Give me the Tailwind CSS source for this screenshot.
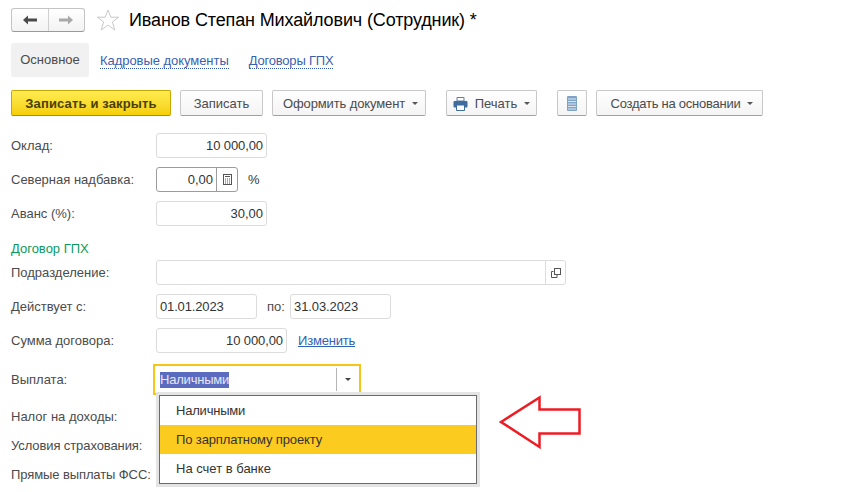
<!DOCTYPE html>
<html>
<head>
    <meta charset="utf-8">
    <title>Иванов Степан Михайлович (Сотрудник)</title>
    <script src="https://cdn.jsdelivr.net/npm/@tailwindcss/browser@4"></script>
</head>
<body class="bg-white overflow-hidden">
<div class="relative w-[854px] h-[492px] overflow-hidden pl-[11px] pt-[8px] font-['Liberation_Sans',Arial,sans-serif] text-[13px] text-[#4b4b4b]">

    <!-- title row -->
    <div class="flex items-center h-[24px]">
        <div class="flex w-[74px] h-[24px] rounded-[3px] border border-[#c4c4c4] border-b-[#9a9a9a] bg-gradient-to-b from-white to-[#f3f3f3]">
            <div class="flex-1 flex items-center justify-center border-r border-[#cfcfcf]">
                <svg width="14" height="10" viewBox="0 0 14 10"><path d="M0 5L5 0.5V3.5H14V6.5H5V9.5Z" fill="#4a4a4a"/></svg>
            </div>
            <div class="flex-1 flex items-center justify-center">
                <svg width="14" height="10" viewBox="0 0 14 10"><path d="M14 5L9 0.5V3.5H0V6.5H9V9.5Z" fill="#a9a9a9"/></svg>
            </div>
        </div>
        <svg class="ml-[11px]" width="24" height="22" viewBox="0 0 24 22"><path d="M12 1L14.8 8.2H22.6L16.4 13L18.8 21L12 16.2L5.2 21L7.6 13L1.4 8.2H9.2Z" fill="white" stroke="#c9c9c9"/></svg>
        <h1 class="ml-[9px] text-[18px] tracking-[-0.13px] text-black whitespace-nowrap">Иванов Степан Михайлович (Сотрудник) *</h1>
    </div>

    <!-- tabs -->
    <div class="flex items-center mt-[11px] h-[34px]">
        <div class="flex items-center justify-center w-[78px] h-[34px] rounded-[3px] bg-[#f1f1f1] text-[#4b4b4b]">Основное</div>
        <a class="ml-[11px] mt-[2px] tracking-[-0.05px] text-[#3a5fb0] border-b border-dotted border-[#2f55b0] leading-[14px]">Кадровые документы</a>
        <a class="ml-[20px] mt-[2px] tracking-[-0.2px] text-[#3a5fb0] border-b border-dotted border-[#2f55b0] leading-[14px]">Договоры ГПХ</a>
    </div>

    <!-- command bar -->
    <div class="flex items-center mt-[13px] h-[26px]">
        <button class="w-[160px] h-[26px] pt-[1px] rounded-[2px] border border-[#c8a800] border-b-[#a89000] bg-gradient-to-b from-[#ffec4d] to-[#f6cf00] font-bold tracking-[0.15px] text-[#4a4000]">Записать и закрыть</button>
        <button class="ml-[9px] w-[83px] h-[26px] pt-[1px] rounded-[2px] border border-[#c8c8c8] border-b-[#a0a0a0] bg-gradient-to-b from-white to-[#f4f4f4]">Записать</button>
        <button class="ml-[9px] w-[154px] h-[26px] pt-[1px] pl-[3px] rounded-[2px] border border-[#c8c8c8] border-b-[#a0a0a0] bg-gradient-to-b from-white to-[#f4f4f4] flex items-center justify-center gap-[7px] tracking-[-0.12px]">Оформить документ <span class="w-0 h-0 border-x-[3px] border-x-transparent border-t-[3px] border-t-[#555]"></span></button>
        <button class="ml-[20px] w-[91px] h-[26px] pt-[1px] rounded-[2px] border border-[#c8c8c8] border-b-[#a0a0a0] bg-gradient-to-b from-white to-[#f4f4f4] flex items-center justify-center gap-[7px]">
            <svg width="15" height="14" viewBox="0 0 15 14"><path d="M4 0.5H11V4H4Z" fill="white" stroke="#5b7fa6"/><rect x="0.5" y="4" width="14" height="6.5" rx="1" fill="#3f6d9e"/><path d="M3.5 8H11.5V13.5H3.5Z" fill="white" stroke="#3f6d9e"/></svg>
            Печать <span class="w-0 h-0 border-x-[3px] border-x-transparent border-t-[3px] border-t-[#555]"></span>
        </button>
        <button class="ml-[20px] w-[30px] h-[26px] rounded-[2px] border border-[#c8c8c8] border-b-[#a0a0a0] bg-gradient-to-b from-white to-[#f4f4f4] flex items-center justify-center">
            <svg width="10" height="15" viewBox="0 0 10 15"><rect width="10" height="15" rx="1" fill="#7fa3c7"/><path d="M1 3H9M1 5.5H9M1 8H9M1 10.5H9M1 13H9" stroke="#dfe8f1"/></svg>
        </button>
        <button class="ml-[9px] w-[167px] h-[26px] pt-[1px] pl-[5px] rounded-[2px] border border-[#c8c8c8] border-b-[#a0a0a0] bg-gradient-to-b from-white to-[#f4f4f4] flex items-center justify-center gap-[7px] tracking-[-0.25px]">Создать на основании <span class="w-0 h-0 border-x-[3px] border-x-transparent border-t-[3px] border-t-[#555]"></span></button>
    </div>

    <!-- form -->
    <div class="flex items-center mt-[17px] h-[25px]">
        <div class="w-[145px]">Оклад:</div>
        <div class="w-[111px] h-[25px] rounded-[3px] border border-[#dcdcdc] flex items-center justify-end pr-[3px] text-[#333] tracking-[-0.1px]">10 000,00</div>
    </div>
    <div class="flex items-center mt-[9px] h-[25px]">
        <div class="w-[145px]">Северная надбавка:</div>
        <div class="w-[82px] h-[25px] rounded-[3px] border border-[#9c9c9c] flex items-center text-[#333]">
            <div class="flex-1 text-right pr-[3px]">0,00</div>
            <div class="w-[21px] h-full border-l border-[#9c9c9c] flex items-center justify-center">
                <svg width="9" height="11" viewBox="0 0 9 11"><rect x="0.5" y="0.5" width="8" height="10" fill="none" stroke="#555"/><path d="M2 2.5H7" stroke="#555"/><path d="M2 5H3M4 5H5M6 5H7M2 7H3M4 7H5M6 7H7M2 9H3M4 9H5M6 9H7" stroke="#555"/></svg>
            </div>
        </div>
        <div class="ml-[10px] text-[#333]">%</div>
    </div>
    <div class="flex items-center mt-[9px] h-[25px]">
        <div class="w-[145px]">Аванс (%):</div>
        <div class="w-[111px] h-[25px] rounded-[3px] border border-[#dcdcdc] flex items-center justify-end pr-[3px] text-[#333]">30,00</div>
    </div>

    <div class="mt-[15px] h-[16px] leading-[16px] text-[#0b9a5b]">Договор ГПХ</div>

    <div class="flex items-center mt-[3px] h-[25px]">
        <div class="w-[145px]">Подразделение:</div>
        <div class="w-[410px] h-[25px] rounded-[3px] border border-[#dcdcdc] flex justify-end">
            <div class="w-[20px] h-full border-l border-[#dcdcdc] flex items-center justify-center">
                <svg width="10" height="10" viewBox="0 0 10 10"><path d="M2.5 3.5H0.5V9.5H6V7" fill="none" stroke="#555"/><rect x="3.5" y="0.5" width="6" height="6" fill="none" stroke="#555"/></svg>
            </div>
        </div>
    </div>
    <div class="flex items-center mt-[9px] h-[25px]">
        <div class="w-[145px]">Действует с:</div>
        <div class="w-[101px] h-[25px] rounded-[3px] border border-[#dcdcdc] flex items-center pl-[3px] text-[#333] tracking-[-0.15px]">01.01.2023</div>
        <div class="ml-[10px] w-[23px]">по:</div>
        <div class="w-[101px] h-[25px] rounded-[3px] border border-[#dcdcdc] flex items-center pl-[3px] text-[#333] tracking-[-0.1px]">31.03.2023</div>
    </div>
    <div class="flex items-center mt-[9px] h-[25px]">
        <div class="w-[145px]">Сумма договора:</div>
        <div class="w-[131px] h-[25px] rounded-[3px] border border-[#dcdcdc] flex items-center justify-end pr-[3px] text-[#333] tracking-[-0.1px]">10 000,00</div>
        <a class="ml-[11px] text-[#2f62b5] underline tracking-[-0.2px]">Изменить</a>
    </div>

    <div class="flex items-center mt-[11px] h-[31px]">
        <div class="w-[142px]">Выплата:</div>
        <div class="w-[208px] h-[31px] border-2 border-[#f5c518] flex items-center pl-[5px] text-[#333]">
            <span class="bg-[#5b6cc0] text-[#e8e8f5] leading-[16px] tracking-[-0.2px]">Наличными</span>
            <div class="ml-auto w-[23px] h-[23px] border-l border-[#b5b5b5] flex items-center justify-center">
                <span class="w-0 h-0 border-x-[3px] border-x-transparent border-t-[3px] border-t-[#444]"></span>
            </div>
        </div>
    </div>
    <div class="mt-[14px] h-[16px] leading-[16px]">Налог на доходы:</div>
    <div class="mt-[13px] h-[16px] leading-[16px] tracking-[-0.1px]">Условия страхования:</div>
    <div class="mt-[13px] h-[16px] leading-[16px] tracking-[-0.1px]">Прямые выплаты ФСС:</div>

    <!-- dropdown list -->
    <div class="absolute left-[159px] top-[395px] w-[318px] h-[89px] border border-[#6b6b6b] bg-white shadow-[3px_3px_0_#e4e4e4,-3px_-3px_0_#e4e4e4,3px_-3px_0_#e4e4e4,-3px_3px_0_#e4e4e4] text-[#333]">
        <div class="h-[29px] flex items-center pl-[16px] tracking-[-0.2px]">Наличными</div>
        <div class="h-[29px] flex items-center pl-[16px] bg-[#fbcc1f] tracking-[-0.13px]">По зарплатному проекту</div>
        <div class="h-[29px] flex items-center pl-[16px]">На счет в банке</div>
    </div>

    <!-- red arrow annotation -->
    <svg class="absolute left-[498px] top-[394px]" width="86" height="58" viewBox="0 0 86 58">
        <path d="M3 28L41.5 3.5V15.5H81.5V39.5H41.5V53Z" fill="white" stroke="#ed1c24" stroke-width="2.5"/>
    </svg>
</div>
</body>
</html>
